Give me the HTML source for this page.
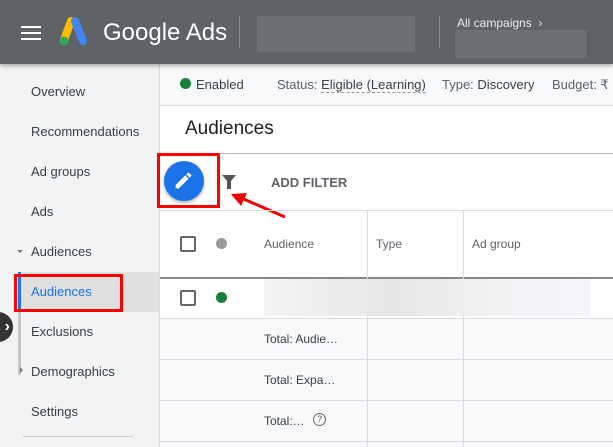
<!DOCTYPE html><html><head><style>
body{margin:0;width:613px;height:447px;overflow:hidden;font-family:"Liberation Sans",sans-serif;position:relative;background:#fff}
.a{position:absolute}
.t{font-size:13px;color:#3c4043;white-space:nowrap}
</style></head><body>
<div class="a" style="left:0;top:0;width:613px;height:64px;background:#5f6368;box-shadow:0 2px 4px rgba(0,0,0,.3);z-index:2">
 <div class="a" style="left:21px;top:26px;width:20px;height:2px;background:#fff;box-shadow:0 6px 0 #fff,0 12px 0 #fff"></div>
 <svg class="a" style="left:59px;top:16px" width="30" height="30" viewBox="0 0 30 30"><path d="M12 5 L5 24" stroke="#fbbc04" stroke-width="8" stroke-linecap="round"/><path d="M16 5 L24 25" stroke="#4285f4" stroke-width="8" stroke-linecap="round"/><circle cx="5" cy="25" r="4.5" fill="#34a853"/></svg>
 <div class="a" style="left:103px;top:19px;font-size:24px;color:#fff">Google Ads</div>
 <div class="a" style="left:239px;top:16px;width:1px;height:32px;background:#888"></div>
 <div class="a" style="left:257px;top:16px;width:158px;height:36px;background:#6c6f74"></div>
 <div class="a" style="left:439px;top:16px;width:1px;height:32px;background:#888"></div>
 <div class="a" style="left:457px;top:16px;font-size:12px;color:#e8eaed">All campaigns &nbsp;›</div>
 <div class="a" style="left:455px;top:30px;width:132px;height:28px;background:#6c6f74"></div>
</div>
<div class="a" style="left:0;top:64px;width:159px;height:383px;background:#f1f3f4;border-right:1px solid #dadce0"></div>
<div class="a" style="left:20px;top:272px;width:139px;height:40px;background:#e0e0e0"></div>
<div class="a" style="left:18px;top:272px;width:3px;height:103px;background:#c8c8c8"></div>
<div class="a" style="left:18px;top:272px;width:3px;height:40px;background:#1a73e8"></div>
<div class="a t" style="left:31px;top:84px">Overview</div>
<div class="a t" style="left:31px;top:124px">Recommendations</div>
<div class="a t" style="left:31px;top:164px">Ad groups</div>
<div class="a t" style="left:31px;top:204px">Ads</div>
<div class="a" style="left:17px;top:250px;border:3px solid transparent;border-top:3px solid #777"></div>
<div class="a t" style="left:31px;top:244px">Audiences</div>
<div class="a t" style="left:31px;top:284px;color:#1a73e8">Audiences</div>
<div class="a t" style="left:31px;top:324px">Exclusions</div>
<div class="a" style="left:20px;top:367px;border:3px solid transparent;border-left:3px solid #777"></div>
<div class="a t" style="left:31px;top:364px">Demographics</div>
<div class="a t" style="left:31px;top:404px">Settings</div>
<div class="a" style="left:23px;top:436px;width:110px;height:1px;background:#ccc"></div>
<div class="a" style="left:-17px;top:312px;width:30px;height:30px;border-radius:50%;background:#333;color:#fff;font-size:16px;font-weight:bold;line-height:30px;text-align:right;box-sizing:border-box;padding-right:3px">›</div>
<div class="a" style="left:14px;top:274px;width:103px;height:32px;border:3px solid #f00"></div>
<div class="a" style="left:160px;top:64px;width:453px;height:41px;background:#f8f9fa;border-bottom:1px solid #dadce0"></div>
<div class="a" style="left:180px;top:78px;width:11px;height:11px;border-radius:50%;background:#188038"></div>
<div class="a t" style="left:196px;top:77px">Enabled</div>
<div class="a t" style="left:277px;top:77px;color:#5f6368">Status: <span style="color:#3c4043;border-bottom:1px dashed #999">Eligible (Learning)</span></div>
<div class="a t" style="left:442px;top:77px;color:#5f6368">Type: <span style="color:#3c4043">Discovery</span></div>
<div class="a t" style="left:552px;top:77px;color:#5f6368">Budget: ₹</div>
<div class="a" style="left:185px;top:118px;font-size:19px;color:#202124">Audiences</div>
<div class="a" style="left:160px;top:153px;width:453px;height:1px;background:#bbb"></div>
<div class="a" style="left:164px;top:161px;width:40px;height:40px;border-radius:50%;background:#1a73e8;box-shadow:0 2px 3px rgba(0,0,0,.3)"></div>
<svg class="a" style="left:173px;top:170px" width="21" height="21" viewBox="0 0 24 24"><path d="M3 17.25V21h3.75L17.81 9.94l-3.75-3.75L3 17.25zM20.71 7.04a1 1 0 0 0 0-1.41l-2.34-2.34a1 1 0 0 0-1.41 0l-1.83 1.83 3.75 3.75 1.83-1.83z" fill="#fff"/></svg>
<svg class="a" style="left:221px;top:174px" width="16" height="16" viewBox="0 0 16 16"><path d="M1 1h14l-5 6v8h-4V7z" fill="#555"/></svg>
<div class="a" style="left:271px;top:175px;font-size:13px;font-weight:bold;color:#5f6368">ADD FILTER</div>
<div class="a" style="left:157px;top:153px;width:57px;height:49px;border:3px solid #f00"></div>
<svg class="a" style="left:225px;top:188px" width="70" height="35"><path d="M60 29 L14 9" stroke="#e00" stroke-width="3"/><path d="M6 6 L22 5 L16 18z" fill="#e00"/></svg>
<div class="a" style="left:160px;top:210px;width:453px;height:66px;border-top:1px solid #dadce0;border-bottom:2px solid #888"></div>
<div class="a" style="left:160px;top:318px;width:453px;height:129px;background:#f8f9fa"></div>
<div class="a" style="left:160px;top:318px;width:453px;height:1px;background:#dadce0;box-shadow:0 41px 0 #dadce0,0 82px 0 #dadce0,0 123px 0 #dadce0"></div>
<div class="a" style="left:367px;top:210px;width:1px;height:237px;background:#dadce0"></div>
<div class="a" style="left:463px;top:210px;width:1px;height:237px;background:#dadce0"></div>
<div class="a" style="left:180px;top:236px;width:12px;height:12px;border:2px solid #666;border-radius:2px"></div>
<div class="a" style="left:216px;top:238px;width:11px;height:11px;border-radius:50%;background:#999"></div>
<div class="a" style="left:264px;top:237px;font-size:12px;color:#5f6368">Audience</div>
<div class="a" style="left:376px;top:237px;font-size:12px;color:#5f6368">Type</div>
<div class="a" style="left:472px;top:237px;font-size:12px;color:#5f6368">Ad group</div>
<div class="a" style="left:180px;top:290px;width:12px;height:12px;border:2px solid #666;border-radius:2px"></div>
<div class="a" style="left:216px;top:292px;width:11px;height:11px;border-radius:50%;background:#188038"></div>
<div class="a" style="left:264px;top:279px;width:326px;height:37px;background:linear-gradient(90deg,#f4f4f4,#e6e6e6 40%,#f2f2f4 70%,#f4f6fa)"></div>
<div class="a" style="left:264px;top:332px;font-size:12px;color:#3c4043">Total: Audie…</div>
<div class="a" style="left:264px;top:373px;font-size:12px;color:#3c4043">Total: Expa…</div>
<div class="a" style="left:264px;top:414px;font-size:12px;color:#3c4043">Total:…</div>
<div class="a" style="left:313px;top:413px;width:11px;height:11px;border:1.5px solid #666;border-radius:50%;font-size:9px;text-align:center;line-height:11px;color:#555">?</div>
</body></html>
